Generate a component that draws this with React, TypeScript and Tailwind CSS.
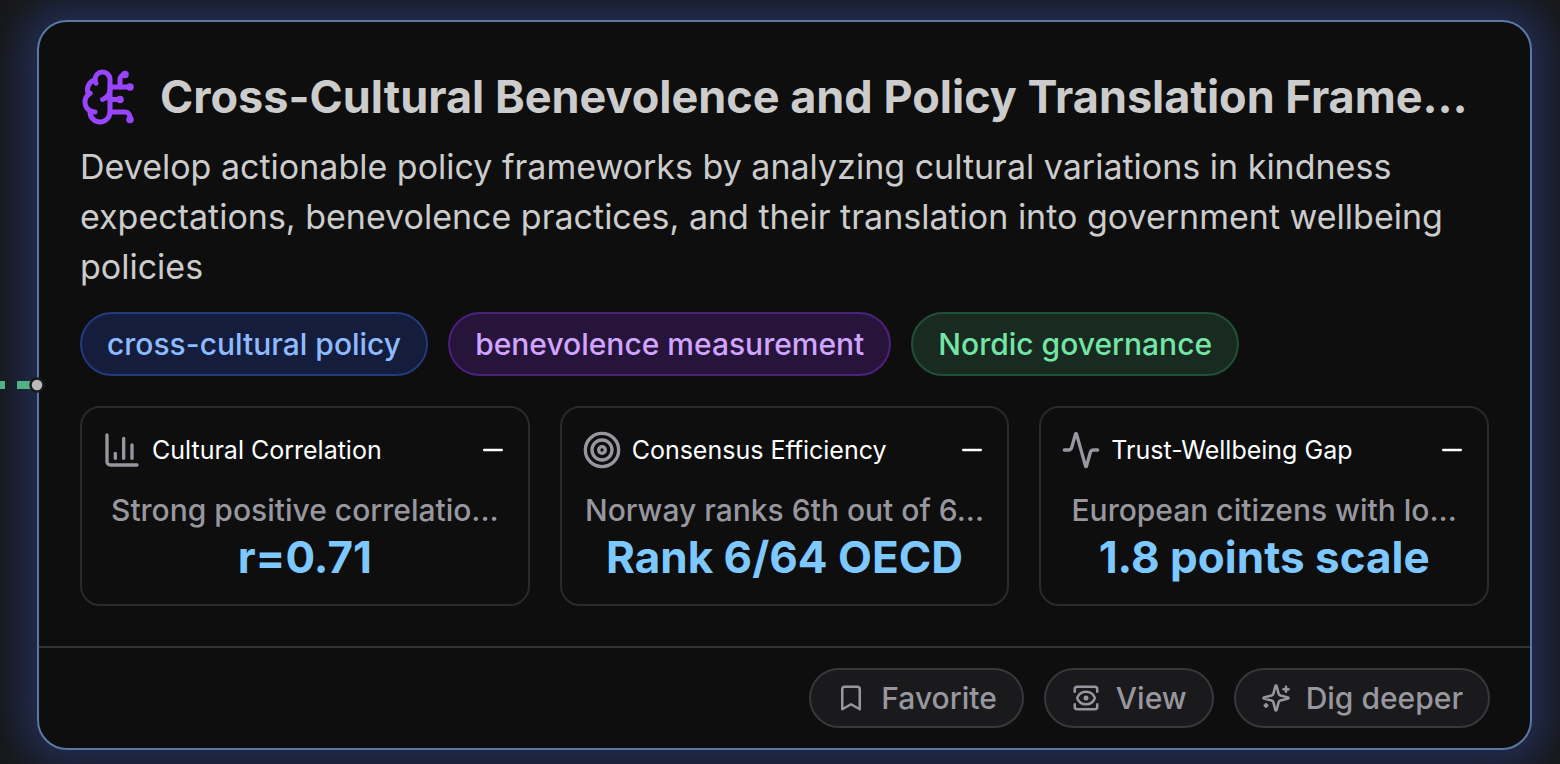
import type { ReactNode } from "react";
import { Activity, Bookmark, BrainCircuit, ChartColumn, Minus, Target, View } from "lucide-react";

function SparklesIcon() {
  return (
    <svg
      viewBox="0 0 24 24"
      className="size-[30px]"
      fill="none"
      stroke="currentColor"
      strokeWidth="2"
      strokeLinecap="round"
      strokeLinejoin="round"
      aria-hidden="true"
    >
      <path d="M9.937 15.5A2 2 0 0 0 8.5 14.063l-6.135-1.582a.5.5 0 0 1 0-.962L8.5 9.936A2 2 0 0 0 9.937 8.5l1.582-6.135a.5.5 0 0 1 .963 0L14.063 8.5A2 2 0 0 0 15.5 9.937l6.135 1.581a.5.5 0 0 1 0 .964L15.5 14.063a2 2 0 0 0-1.437 1.437l-1.582 6.135a.5.5 0 0 1-.963 0z" />
      <path d="M20 3v4" />
      <path d="M22 5h-4" />
      <path d="M4 17v2" />
      <path d="M5 18H3" />
    </svg>
  );
}

function Tag({ className, children }: { className: string; children: ReactNode }) {
  return (
    <li className={`rounded-full border-2 px-[25px] py-[9px] text-[30px] font-medium leading-[42px] ${className}`}>
      {children}
    </li>
  );
}

function Metric({ icon, title, note, value }: { icon: ReactNode; title: string; note: string; value: string }) {
  return (
    <section className="min-w-0 rounded-[20px] border-2 border-[#2a2a2c] px-5 pt-5 pb-[22px]">
      <div className="flex items-center gap-[10px] text-white">
        <span className="shrink-0 text-[#98979f]">{icon}</span>
        <h2 className="flex-1 whitespace-nowrap text-[25px] leading-[44px]">{title}</h2>
        <button type="button" aria-label={`Collapse ${title}`}>
          <Minus className="size-[30px]" />
        </button>
      </div>
      <div className="flex flex-col items-center whitespace-nowrap pt-4">
        <p className="text-[30px] font-medium leading-[44px] text-[#98979f]">{note}</p>
        <p className="text-[44px] font-bold leading-[50px] text-[#7cc8ff]">{value}</p>
      </div>
    </section>
  );
}

function ActionButton({ icon, children }: { icon: ReactNode; children: ReactNode }) {
  return (
    <button
      type="button"
      className="flex h-[60px] items-center gap-[15px] rounded-full border-2 border-[#38373c] bg-[#1a1a1c] px-[25px] text-[30px] font-medium text-[#98979f]"
    >
      {icon}
      {children}
    </button>
  );
}

export default function App() {
  return (
    <main className="min-h-screen overflow-hidden bg-[#171717] pt-5 pr-7 pb-[14px] pl-[37px] font-['Inter',sans-serif]">
      <article className="relative rounded-[30px] border-2 border-[#5a78a6] bg-[#0e0e0e] shadow-[0_0_36px_20px_#202b4e]">
        <svg className="absolute top-[353px] -left-[39px] h-5 w-12" viewBox="0 0 48 20" aria-hidden="true">
          <path d="M0 10H5M17 10H32" stroke="#50b285" strokeWidth="8" />
          <circle cx="37" cy="10" r="6.5" fill="#bbb" stroke="#1a1a1c" strokeWidth="2.5" />
        </svg>
        <div className="px-[41px] pt-[45px] pb-10">
          <header className="flex items-center gap-5">
            <BrainCircuit className="size-[60px] shrink-0 text-[#9945ff]" />
            <h1 className="whitespace-nowrap text-[45px] font-bold leading-[60px] text-[#cccccc]">
              Cross-Cultural Benevolence and Policy Translation Frame…
            </h1>
          </header>
          <p className="mt-[15px] text-[34px] leading-[50px] text-[#cccccc]">
            Develop actionable policy frameworks by analyzing cultural variations in kindness expectations, benevolence
            practices, and their translation into government wellbeing policies
          </p>
          <ul className="mt-5 flex gap-5">
            <Tag className="border-[#233a7c] bg-[#151d3c] text-[#8ebbff]">cross-cultural policy</Tag>
            <Tag className="border-[#4b217c] bg-[#27143b] text-[#d1a5ff]">benevolence measurement</Tag>
            <Tag className="border-[#215038] bg-[#192a21] text-[#73e5a6]">Nordic governance</Tag>
          </ul>
          <div className="mt-[30px] grid grid-cols-3 gap-[30px]">
            <Metric
              icon={<ChartColumn className="size-10" />}
              title="Cultural Correlation"
              note="Strong positive correlatio..."
              value="r=0.71"
            />
            <Metric
              icon={<Target className="size-10" />}
              title="Consensus Efficiency"
              note="Norway ranks 6th out of 6..."
              value="Rank 6/64 OECD"
            />
            <Metric
              icon={<Activity className="size-10" />}
              title="Trust-Wellbeing Gap"
              note="European citizens with lo..."
              value="1.8 points scale"
            />
          </div>
        </div>
        <footer className="flex justify-end gap-5 border-t-2 border-[#333336] px-10 py-5">
          <ActionButton icon={<Bookmark className="size-[30px]" />}>Favorite</ActionButton>
          <ActionButton icon={<View className="size-[30px]" />}>View</ActionButton>
          <ActionButton icon={<SparklesIcon />}>Dig deeper</ActionButton>
        </footer>
      </article>
    </main>
  );
}
